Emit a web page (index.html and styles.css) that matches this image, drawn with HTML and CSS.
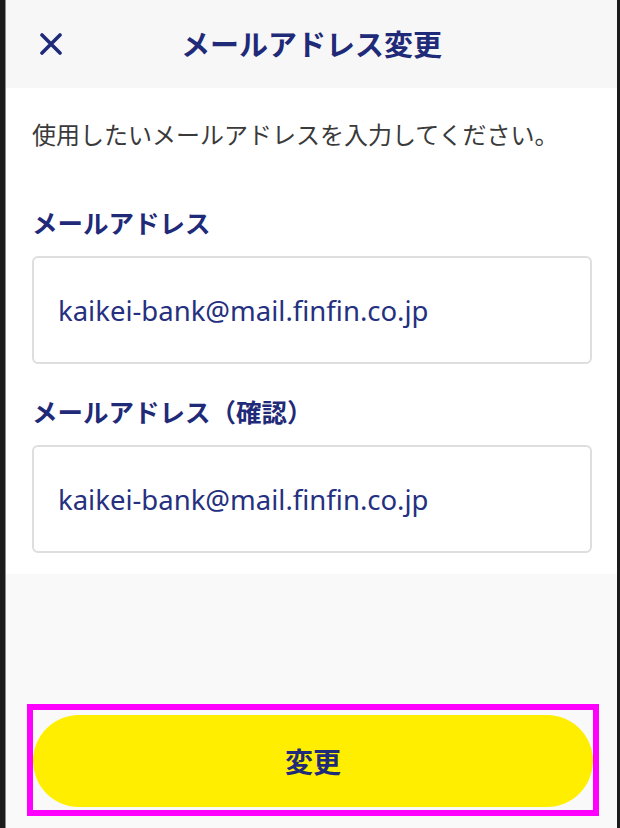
FILE: index.html
```html
<!DOCTYPE html>
<html lang="ja">
<head>
  <meta charset="UTF-8" />
  <meta name="viewport" content="width=device-width, initial-scale=1" />
  <title>メールアドレス変更</title>
  <link rel="stylesheet" href="styles.css">
</head>
<body>
  <div class="screen">
    <header class="topbar">
      <button class="close-btn" aria-label="閉じる">
        <svg width="22" height="22" viewBox="0 0 22 22">
          <path d="M2 2 L20 20 M20 2 L2 20" stroke="#1f2a78" stroke-width="3.6" stroke-linecap="round" fill="none" />
        </svg>
      </button>
      <h1>メールアドレス変更</h1>
    </header>

    <main class="form-area">
      <p class="lead">使用したいメールアドレスを入力してください。</p>

      <label class="field-label" for="mail">メールアドレス</label>
      <div class="field" id="mail">kaikei-bank@mail.finfin.co.jp</div>

      <label class="field-label second" for="mailConfirm">メールアドレス（確認）</label>
      <div class="field" id="mailConfirm">kaikei-bank@mail.finfin.co.jp</div>
    </main>

    <footer class="actions">
      <div class="highlight">
        <button class="submit-btn">変更</button>
      </div>
    </footer>
  </div>
</body>
</html>
```

FILE: styles.css
```css
html, body {
  margin: 0;
  padding: 0;
  height: 100%;
}

body {
  background: #1b1b1b;
  font-family: "Noto Sans CJK JP", "Noto Sans", sans-serif;
  color: #333;
}

.screen {
  margin-left: 5px;
  width: 612px;
  min-height: 100vh;
  border-left: 1px solid #8c8c8c;
  background: #f9f9f9;
  display: flex;
  flex-direction: column;
  box-sizing: border-box;
}

.topbar {
  height: 88px;
  background: #f7f7f7;
  display: flex;
  align-items: center;
  justify-content: center;
  position: relative;
}

.close-btn {
  position: absolute;
  left: 34px;
  top: 33px;
  padding: 0;
  border: none;
  background: none;
  width: 22px;
  height: 22px;
}

.close-btn svg {
  display: block;
}

.topbar h1 {
  margin: 0 0 2px 0;
  font-size: 29px;
  font-weight: bold;
  color: #1f2a78;
  line-height: 1;
}

.form-area {
  background: #fff;
  padding: 30px 25px 21px 26px;
}

.lead {
  margin: 0;
  font-size: 24px;
  line-height: 32px;
  color: #3a3a3a;
}

.field-label {
  display: block;
  margin-top: 56px;
  font-size: 25.5px;
  line-height: 32px;
  font-weight: bold;
  color: #1f2a78;
}

.field-label.second {
  margin-top: 31px;
}

.field {
  margin-top: 18px;
  height: 108px;
  box-sizing: border-box;
  border: 2px solid #dedede;
  border-radius: 6px;
  padding: 0 24px;
  display: flex;
  align-items: center;
  font-family: "Noto Sans", "Noto Sans CJK JP", sans-serif;
  font-size: 27.5px;
  color: #253080;
}

.actions {
  padding: 130px 0 11px 21px;
}

.highlight {
  width: 560px;
  border: 6px solid #ff00ff;
  padding: 5px 0 3px 0;
}

.submit-btn {
  display: block;
  width: 560px;
  height: 92px;
  border: none;
  border-radius: 46px;
  background: #ffee00;
  font-family: "Noto Sans CJK JP", sans-serif;
  font-size: 28px;
  font-weight: bold;
  color: #1f2a78;
  cursor: pointer;
}
```
